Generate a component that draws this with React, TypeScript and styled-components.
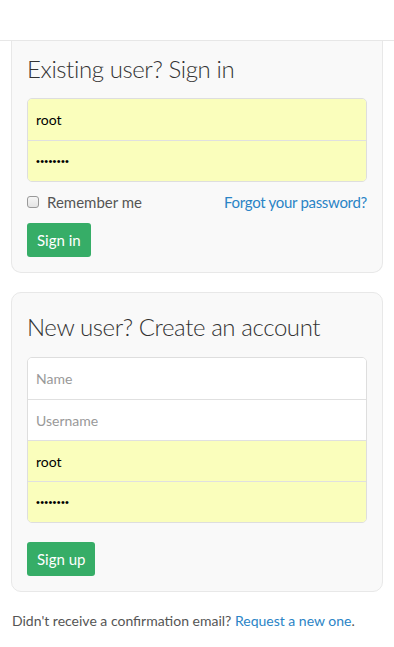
import React from "react";
import styled, { createGlobalStyle } from "styled-components";

const GlobalStyle = createGlobalStyle`
  html, body {
    margin: 0;
    padding: 0;
    background: #fff;
    font-family: "Lato", "Liberation Sans", sans-serif;
    color: #555;
  }
  * { box-sizing: border-box; }
`;

const TopBar = styled.div`
  height: 41px;
  border-bottom: 1px solid #e7e7e7;
`;

const Page = styled.div`
  padding: 0 11px 0 11px;
`;

const Card = styled.div<{ $top?: boolean }>`
  background: #f9f9f9;
  border: 1px solid #e8e8e8;
  border-top: ${(p) => (p.$top ? "none" : "1px solid #e8e8e8")};
  border-radius: ${(p) => (p.$top ? "0 0 10px 10px" : "10px")};
  padding: ${(p) => (p.$top ? "13px 15px 15px" : "19px 15px 15px")};
  margin-bottom: ${(p) => (p.$top ? 19 : 0)}px;
  width: 372px;
`;

const Heading = styled.h2<{ $gap?: number }>`
  margin: 0 0 ${(p) => p.$gap ?? 15}px 0;
  font-size: 24px;
  font-weight: 300;
  color: #333;
  line-height: 29px;
  letter-spacing: -0.4px;
`;

const InputGroup = styled.div`
  border: 1px solid #dedede;
  border-radius: 5px;
  overflow: hidden;
  display: flex;
  flex-direction: column;
`;

const Field = styled.input<{ $filled?: boolean }>`
  height: 41px;
  border: none;
  border-top: 1px solid #e0e0e0;
  &:first-child { border-top: none; }
  background: ${(p) => (p.$filled ? "#fafebc" : "#fff")};
  padding: 0 8px;
  font-family: "Lato", "Liberation Sans", sans-serif;
  font-size: 14px;
  color: #000;
  outline: none;
  &::placeholder { color: #999; }
  &[type="password"] {
    font-family: "Liberation Sans", sans-serif;
    font-size: 11px;
    letter-spacing: 0.3px;
  }
`;

const OptionsRow = styled.div`
  display: flex;
  align-items: center;
  justify-content: space-between;
  margin: 11px 0 12px 0;
  height: 18px;
`;

const CheckLabel = styled.label`
  display: flex;
  align-items: center;
  gap: 8px;
  font-size: 15px;
  color: #555;
`;

const Box = styled.span`
  width: 12px;
  height: 12px;
  border: 1px solid #999;
  border-radius: 3px;
  background: linear-gradient(#f6f6f6, #e4e4e4);
`;

const Link = styled.a<{ $size?: number }>`
  color: #2a84c6;
  text-decoration: none;
  font-size: ${(p) => p.$size ?? 15}px;
  letter-spacing: ${(p) => (p.$size ? 0 : -0.3)}px;
`;

const Button = styled.button<{ $mt?: number }>`
  margin-top: ${(p) => p.$mt ?? 0}px;
  height: 34px;
  padding: 0 10px;
  border: none;
  border-radius: 3px;
  background: #36ad67;
  color: #fff;
  font-family: "Lato", "Liberation Sans", sans-serif;
  font-size: 15px;
`;

const Footer = styled.p`
  margin: 20px 0 0 0;
  padding: 0 1px;
  font-size: 14px;
  color: #555;
`;

export default function App() {
  return (
    <>
      <GlobalStyle />
      <TopBar />
      <Page>
        <Card $top>
          <Heading>Existing user? Sign in</Heading>
          <InputGroup>
            <Field $filled defaultValue="root" />
            <Field $filled type="password" defaultValue="password" />
          </InputGroup>
          <OptionsRow>
            <CheckLabel>
              <Box />
              Remember me
            </CheckLabel>
            <Link href="#">Forgot your password?</Link>
          </OptionsRow>
          <Button>Sign in</Button>
        </Card>
        <Card>
          <Heading $gap={16}>New user? Create an account</Heading>
          <InputGroup>
            <Field placeholder="Name" />
            <Field placeholder="Username" />
            <Field $filled defaultValue="root" />
            <Field $filled type="password" defaultValue="password" />
          </InputGroup>
          <Button $mt={19}>Sign up</Button>
        </Card>
        <Footer>
          Didn't receive a confirmation email? <Link href="#" $size={14}>Request a new one</Link>.
        </Footer>
      </Page>
    </>
  );
}
